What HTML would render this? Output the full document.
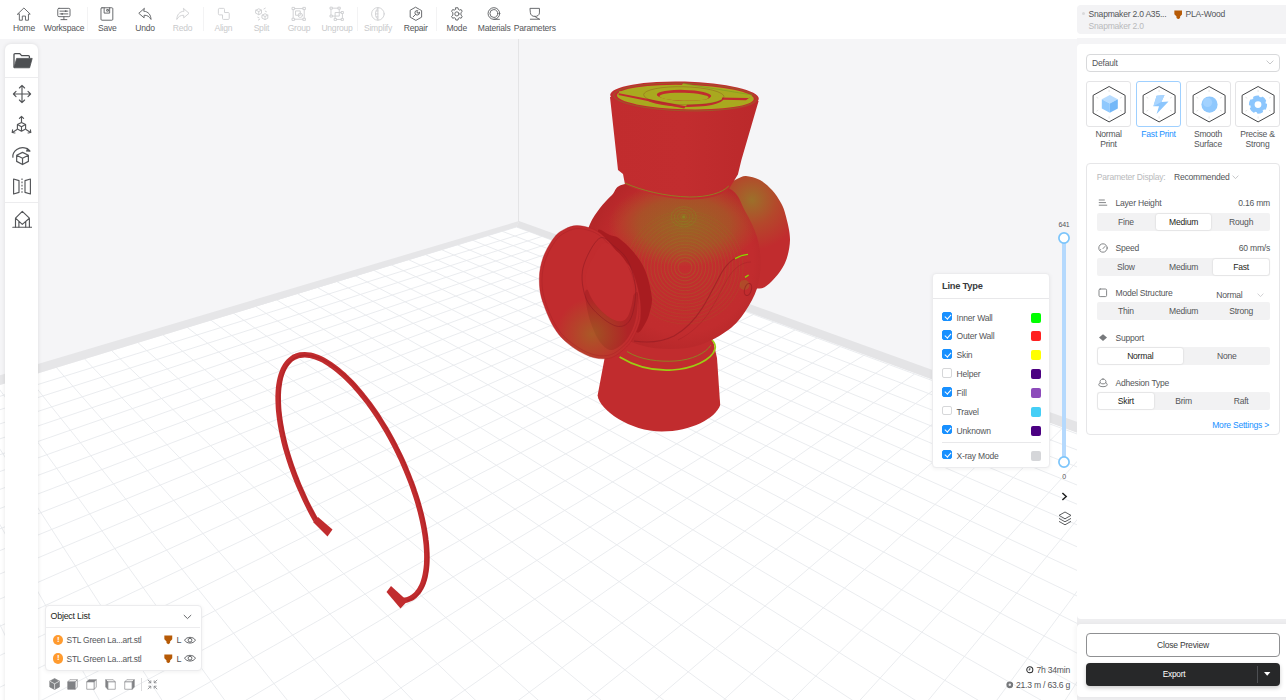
<!DOCTYPE html>
<html><head><meta charset="utf-8"><title>Snapmaker Luban</title>
<style>
*{box-sizing:border-box;margin:0;padding:0}
html,body{width:1286px;height:700px;overflow:hidden;background:#f5f5f7;font-family:"Liberation Sans",sans-serif;font-size:8px;color:#545659;letter-spacing:-0.22px}
#scene{position:absolute;left:0;top:0}
.abs{position:absolute}
#topbar{position:absolute;left:0;top:0;width:1286px;height:38.5px;background:#fff}
.tb{position:absolute;top:0;height:38px;text-align:center;font-size:8.55px;color:#55575a;white-space:nowrap}
.tb svg{position:absolute;left:50%;top:5px;margin-left:-9px;width:18px;height:18px}
.tb span{position:absolute;left:-20px;right:-20px;top:22.5px;line-height:10px}
.tb.dis{color:#c9cacc}
.tbsep{position:absolute;top:7px;width:1px;height:24px;background:#f3f3f4}
#machine{position:absolute;left:1077px;top:5px;width:215px;height:28.5px;background:#f3f3f5;border-radius:4px}
#left{position:absolute;left:5px;top:44px;width:33px;height:670px;background:#fff;border-radius:6px;box-shadow:0 0 4px rgba(0,0,0,0.10)}
#left .sep{position:absolute;left:0;width:33px;height:1px;background:#ececee}
#left svg{position:absolute}
.panel{position:absolute;background:#fff;border-radius:4px;border:1px solid #ececee;box-shadow:0 1px 4px rgba(0,0,0,0.06)}
.lt-row{position:absolute;left:0;width:118px;height:12px}
.cb{position:absolute;left:9.7px;top:0px;width:9.6px;height:9.6px;border-radius:2px;border:1px solid #d6d7d9;background:#fff}
.cb.on{background:#1890ff;border-color:#1890ff}
.cb.on:after{content:"";position:absolute;left:2.4px;top:0.4px;width:2.6px;height:5px;border:solid #fff;border-width:0 1.3px 1.3px 0;transform:rotate(42deg)}
.lt-row span{position:absolute;left:24px;top:1.1px;line-height:10px;font-size:8.55px;color:#545659}
.sw{position:absolute;left:98px;top:1px;width:10px;height:10px;border-radius:2px}
#rp1{position:absolute;left:1077px;top:44px;width:215px;height:574.5px;background:#fff;border-radius:4px 0 0 4px}
#rp2{position:absolute;left:1077px;top:624px;width:215px;height:73px;background:#fff;border-radius:4px 0 0 4px;box-shadow:-2px 0 4px rgba(0,0,0,0.04)}
.card{position:absolute;top:81px;width:45px;height:45.5px;border:1px solid #e4e4e6;border-radius:3px;background:#fff}
.card.sel{border-color:#9fd0ff}
.clabel{position:absolute;top:130.4px;width:60px;text-align:center;line-height:9.6px;font-size:8.55px;color:#545659}
.seg{position:absolute;left:1097px;width:173px;height:18px;background:#f2f2f3;border-radius:2px}
.seg div{position:absolute;top:0;height:18px;line-height:19.4px;text-align:center;font-size:8.55px;color:#545659}
.seg div.on{background:#fff;color:#1e1f20;box-shadow:0 0 2px rgba(0,0,0,0.18);border-radius:2px;top:1px;height:16px;line-height:17.4px}
.rl{position:absolute;left:1115.5px;font-size:8.55px;line-height:10px;color:#545659;white-space:nowrap}
.rv{position:absolute;right:16px;font-size:8.55px;line-height:10px;color:#545659;white-space:nowrap}
</style></head><body>
<svg id="scene" width="1286" height="700" viewBox="0 0 1286 700"><defs>
<radialGradient id="gSP" cx="682" cy="262" r="95" gradientUnits="userSpaceOnUse">
<stop offset="0" stop-color="#c32d2f"/><stop offset="0.75" stop-color="#c12c2e"/><stop offset="1" stop-color="#b52729"/></radialGradient>
<radialGradient id="gSP2" cx="684" cy="224" r="76" gradientUnits="userSpaceOnUse" gradientTransform="translate(684 224) scale(1 0.56) translate(-684 -224)">
<stop offset="0" stop-color="#7a8f1e" stop-opacity="0.56"/><stop offset="0.6" stop-color="#808f1e" stop-opacity="0.36"/><stop offset="1" stop-color="#8f8f1e" stop-opacity="0"/></radialGradient>
<radialGradient id="gRF" cx="752" cy="200" r="50" gradientUnits="userSpaceOnUse">
<stop offset="0" stop-color="#9c702a"/><stop offset="0.5" stop-color="#b4482b"/><stop offset="1" stop-color="#c12c2e"/></radialGradient>
<radialGradient id="gLF" cx="592" cy="334" r="36" gradientUnits="userSpaceOnUse">
<stop offset="0" stop-color="#8f8f1e" stop-opacity="0.45"/><stop offset="0.5" stop-color="#8f8f1e" stop-opacity="0.22"/><stop offset="1" stop-color="#8f8f1e" stop-opacity="0"/></radialGradient>
<linearGradient id="gTC" x1="610" y1="0" x2="758" y2="0" gradientUnits="userSpaceOnUse">
<stop offset="0" stop-color="#c12c2e"/><stop offset="0.5" stop-color="#c22d2f"/><stop offset="1" stop-color="#bb292b"/></linearGradient>
</defs><rect x="0" y="0" width="1286" height="700" fill="#f5f5f7"/><polygon points="516.5,227 -10,388 -10,710 1300,710 1300,514 " fill="#ffffff"/><path d="M516.5,227.0L1248.5,497.3M502.3,231.3L1240.1,512.0M487.8,235.7L1231.4,527.5M472.8,240.3L1222.2,543.8M457.4,244.9L1212.5,560.9M441.6,249.7L1202.2,579.0M425.4,254.6L1191.4,598.1M408.6,259.7L1180.0,618.3M391.4,264.9L1167.8,639.8M373.7,270.3L1154.9,662.5M355.4,275.8L1141.2,686.7M336.6,281.5L1126.6,712.5M317.2,287.4L1111.0,740.1M297.2,293.5L1094.3,769.6M276.5,299.8L1076.4,801.2M255.2,306.2L1057.1,835.3M233.2,312.9L1036.3,872.0M210.4,319.8L1013.8,911.7M186.8,327.0L989.4,954.9M162.4,334.4L962.8,1001.9M137.2,342.0L933.7,1053.3M111.0,350.0L901.7,1109.7M83.9,358.2L866.5,1172.0M55.7,366.7L827.4,1241.0M26.5,375.6L783.8,1318.0M-3.8,384.8L734.9,1404.4M-35.4,394.4L679.6,1502.0M-68.3,404.3L616.6,1613.2M-102.5,414.7L544.2,1741.0M-138.1,425.5L460.2,1889.5M-175.3,436.8L361.3,2064.0M-214.1,448.5L243.4,2272.2M-254.7,460.9L100.4,2524.8M-297.2,473.7L-100.0,2588.1M-341.6,487.2L-311.2,2588.5M-388.2,501.3L-522.5,2589.0M516.5,227.0L-388.2,501.3M529.1,231.6L-389.3,517.5M542.0,236.4L-390.4,534.5M555.4,241.4L-391.5,552.5M569.1,246.4L-392.7,571.6M583.3,251.7L-394.0,591.8M597.9,257.1L-395.4,613.3M613.0,262.6L-396.9,636.2M628.5,268.4L-398.5,660.7M644.6,274.3L-400.2,686.8M661.2,280.4L-402.0,714.8M678.4,286.8L-403.9,744.9M696.1,293.3L-406.0,777.3M714.5,300.1L-408.2,812.4M733.6,307.2L-410.7,850.4M753.3,314.5L-413.3,891.7M773.8,322.0L-416.2,936.7M795.1,329.9L-419.4,986.1M817.1,338.0L-422.9,1040.5M840.1,346.5L-426.8,1100.7M863.9,355.3L-431.1,1167.6M888.8,364.5L-435.9,1242.5M914.6,374.0L-441.3,1326.8M941.6,384.0L-447.5,1422.4M969.8,394.4L-454.5,1531.9M999.2,405.2L-462.6,1658.5M1029.9,416.6L-472.2,1806.4M1062.1,428.5L-483.4,1981.6M1095.8,440.9L-497.0,2192.4M1131.2,454.0L-513.6,2450.9M1168.3,467.7L-396.7,2588.7M1207.4,482.1L-166.0,2588.2M1248.5,497.3L64.8,2587.7" stroke="#e8eaed" stroke-width="0.9" fill="none"/><polygon points="519,221 -10,378.3 -10,388 516.5,227" fill="#e6e6e8"/><polygon points="519,221 1090,426.6 1090,437.5 516.5,227" fill="#e4e4e6"/><line x1="518.5" y1="38" x2="518.5" y2="222" stroke="#e4e4e6" stroke-width="1"/><path d="M724.0,186.0C724.2,178.0 728.7,183.2 731.0,182.0C733.3,180.8 735.5,179.5 738.0,178.5C740.5,177.5 742.3,175.8 746.0,176.0C749.7,176.2 755.7,177.7 760.0,180.0C764.3,182.3 768.5,186.2 772.0,190.0C775.5,193.8 778.7,198.6 781.0,203.0C783.3,207.4 784.5,210.4 786.0,216.6C787.5,222.8 790.2,232.3 790.0,240.0C789.8,247.7 788.0,256.2 785.0,263.0C782.0,269.8 776.3,276.7 772.0,281.0C767.7,285.3 763.9,288.8 759.4,288.6C754.9,288.4 749.9,289.8 745.0,280.0C740.1,270.2 733.5,245.7 730.0,230.0C726.5,214.3 723.8,194.0 724.0,186.0Z" fill="url(#gRF)"/><path d="M604.6,358 L597.6,395.5 C599.5,410 630,431.5 661.7,431.5 C691,431.5 716,418 720.2,405 L717,358 L712.5,338 L640,330 Z" fill="#c12c2e"/><path d="M625.0,184.0C613.7,186.5 616.2,191.0 612.0,195.0C607.8,199.0 603.7,203.2 600.0,208.0C596.3,212.8 592.7,217.8 590.0,224.0C587.3,230.2 585.0,236.5 584.0,245.0C583.0,253.5 582.7,265.0 584.0,275.0C585.3,285.0 587.7,295.8 592.0,305.0C596.3,314.2 602.0,323.3 610.0,330.0C618.0,336.7 630.0,341.8 640.0,345.0C650.0,348.2 660.0,349.0 670.0,349.0C680.0,349.0 690.2,348.2 700.0,345.0C709.8,341.8 721.1,335.2 728.6,329.7C736.1,324.1 740.3,318.5 745.0,311.7C749.7,304.9 754.4,296.7 757.0,288.6C759.6,280.5 760.7,271.6 760.7,263.0C760.7,254.4 759.6,245.7 757.0,237.0C754.4,228.3 749.7,219.2 745.0,211.0C740.3,202.8 739.4,193.2 728.6,188.0C717.8,182.8 697.3,180.7 680.0,180.0C662.7,179.3 636.3,181.5 625.0,184.0Z" fill="url(#gSP)"/><path d="M625.0,184.0C613.7,186.5 616.2,191.0 612.0,195.0C607.8,199.0 603.7,203.2 600.0,208.0C596.3,212.8 592.7,217.8 590.0,224.0C587.3,230.2 585.0,236.5 584.0,245.0C583.0,253.5 582.7,265.0 584.0,275.0C585.3,285.0 587.7,295.8 592.0,305.0C596.3,314.2 602.0,323.3 610.0,330.0C618.0,336.7 630.0,341.8 640.0,345.0C650.0,348.2 660.0,349.0 670.0,349.0C680.0,349.0 690.2,348.2 700.0,345.0C709.8,341.8 721.1,335.2 728.6,329.7C736.1,324.1 740.3,318.5 745.0,311.7C749.7,304.9 754.4,296.7 757.0,288.6C759.6,280.5 760.7,271.6 760.7,263.0C760.7,254.4 759.6,245.7 757.0,237.0C754.4,228.3 749.7,219.2 745.0,211.0C740.3,202.8 739.4,193.2 728.6,188.0C717.8,182.8 697.3,180.7 680.0,180.0C662.7,179.3 636.3,181.5 625.0,184.0Z" fill="url(#gSP2)"/><clipPath id="cSP"><path d="M625.0,184.0C613.7,186.5 616.2,191.0 612.0,195.0C607.8,199.0 603.7,203.2 600.0,208.0C596.3,212.8 592.7,217.8 590.0,224.0C587.3,230.2 585.0,236.5 584.0,245.0C583.0,253.5 582.7,265.0 584.0,275.0C585.3,285.0 587.7,295.8 592.0,305.0C596.3,314.2 602.0,323.3 610.0,330.0C618.0,336.7 630.0,341.8 640.0,345.0C650.0,348.2 660.0,349.0 670.0,349.0C680.0,349.0 690.2,348.2 700.0,345.0C709.8,341.8 721.1,335.2 728.6,329.7C736.1,324.1 740.3,318.5 745.0,311.7C749.7,304.9 754.4,296.7 757.0,288.6C759.6,280.5 760.7,271.6 760.7,263.0C760.7,254.4 759.6,245.7 757.0,237.0C754.4,228.3 749.7,219.2 745.0,211.0C740.3,202.8 739.4,193.2 728.6,188.0C717.8,182.8 697.3,180.7 680.0,180.0C662.7,179.3 636.3,181.5 625.0,184.0Z"/></clipPath><g clip-path="url(#cSP)"><ellipse cx="685" cy="267.5" rx="7.0" ry="6.8" stroke="#8a8f20" stroke-opacity="0.300" stroke-width="1.1" fill="none"/><ellipse cx="685" cy="267.5" rx="10.4" ry="10.1" stroke="#8a8f20" stroke-opacity="0.288" stroke-width="1.1" fill="none"/><ellipse cx="685" cy="267.5" rx="13.8" ry="13.4" stroke="#8a8f20" stroke-opacity="0.276" stroke-width="1.1" fill="none"/><ellipse cx="685" cy="267.5" rx="17.2" ry="16.7" stroke="#8a8f20" stroke-opacity="0.264" stroke-width="1.1" fill="none"/><ellipse cx="685" cy="267.5" rx="20.6" ry="20.0" stroke="#8a8f20" stroke-opacity="0.252" stroke-width="1.1" fill="none"/><ellipse cx="685" cy="267.5" rx="24.0" ry="23.3" stroke="#8a8f20" stroke-opacity="0.240" stroke-width="1.1" fill="none"/><ellipse cx="685" cy="267.5" rx="27.4" ry="26.6" stroke="#8a8f20" stroke-opacity="0.228" stroke-width="1.1" fill="none"/><ellipse cx="685" cy="267.5" rx="30.8" ry="29.9" stroke="#8a8f20" stroke-opacity="0.216" stroke-width="1.1" fill="none"/><ellipse cx="685" cy="267.5" rx="34.2" ry="33.2" stroke="#8a8f20" stroke-opacity="0.204" stroke-width="1.1" fill="none"/><ellipse cx="685" cy="267.5" rx="37.6" ry="36.5" stroke="#8a8f20" stroke-opacity="0.192" stroke-width="1.1" fill="none"/><ellipse cx="685" cy="267.5" rx="41.0" ry="39.8" stroke="#8a8f20" stroke-opacity="0.180" stroke-width="1.1" fill="none"/><ellipse cx="685" cy="267.5" rx="44.4" ry="43.1" stroke="#8a8f20" stroke-opacity="0.168" stroke-width="1.1" fill="none"/><ellipse cx="685" cy="267.5" rx="47.8" ry="46.4" stroke="#8a8f20" stroke-opacity="0.156" stroke-width="1.1" fill="none"/><ellipse cx="685" cy="267.5" rx="51.2" ry="49.7" stroke="#8a8f20" stroke-opacity="0.144" stroke-width="1.1" fill="none"/><ellipse cx="685" cy="267.5" rx="54.6" ry="53.0" stroke="#8a8f20" stroke-opacity="0.132" stroke-width="1.1" fill="none"/><ellipse cx="685" cy="267.5" rx="58.0" ry="56.3" stroke="#8a8f20" stroke-opacity="0.120" stroke-width="1.1" fill="none"/><ellipse cx="683.7" cy="216.8" rx="3.0" ry="2.4" stroke="#7f9a20" stroke-opacity="0.28" stroke-width="1" fill="none"/><ellipse cx="683.7" cy="216.8" rx="6.2" ry="5.0" stroke="#7f9a20" stroke-opacity="0.28" stroke-width="1" fill="none"/><ellipse cx="683.7" cy="216.8" rx="9.4" ry="7.5" stroke="#7f9a20" stroke-opacity="0.28" stroke-width="1" fill="none"/><ellipse cx="683.7" cy="216.8" rx="12.6" ry="10.1" stroke="#7f9a20" stroke-opacity="0.28" stroke-width="1" fill="none"/><circle cx="683.7" cy="216.8" r="1.6" fill="#7f9a20" fill-opacity="0.6"/></g><path d="M747.4,254.6 C735,256 728,262 722,272 C715,284 710,296 702.5,307.6 C696,318 688,328 674,336 C662,342 648,343 634,341" stroke="#8c1a20" stroke-opacity="0.55" stroke-width="1.1" fill="none"/><path d="M751,262 C742,262 734,268 728,278 C721,290 716,302 708,314 C700,325 690,334 678,340" stroke="#8c1a20" stroke-opacity="0.3" stroke-width="0.8" fill="none"/><path d="M735,258.6 C740,255.6 744,254.6 748,254.4" stroke="#8fd400" stroke-width="1.3" fill="none"/><circle cx="744.5" cy="285" r="5" fill="#8f8f1e" fill-opacity="0.3"/><ellipse cx="748" cy="289.5" rx="3.4" ry="6.2" transform="rotate(16 748 289.5)" fill="none" stroke="#8c1a20" stroke-opacity="0.6" stroke-width="1"/><path d="M745,277.4 l3.6,-2.4" stroke="#8fd400" stroke-width="1.4"/><path d="M627,351.5 C640,360 660,362 675,361 C692,360 706,353 711,345" stroke="#8a8a20" stroke-width="0.9" fill="none"/><path d="M619.6,357 C636,367 655,371 672,370 C692,369 712,360 715,349 C716,345 714,342 712,340" stroke="#9ccc14" stroke-width="1.7" fill="none"/><path d="M610,97 L618,170 L623,174 L625,184.5 C640,192 665,199 689.6,199.5 C708,199.5 724,195 729.5,188 L737.9,174.5 L741.4,160 L758.6,101 Z" fill="url(#gTC)"/><path d="M625,183 C640,190 665,196.5 689.6,197 C708,197 722,193 728.8,186" stroke="#8a8a20" stroke-opacity="0.85" stroke-width="1" fill="none"/><ellipse cx="684.5" cy="96.8" rx="74.3" ry="15.2" transform="rotate(1.5 684.5 96.8)" fill="#c12c2e"/><g transform="rotate(1.5 685 96.5)"><ellipse cx="685.4" cy="97.1" rx="68.4" ry="12.2" fill="#a9a91f"/><ellipse cx="685" cy="97" rx="71.5" ry="13.8" fill="none" stroke="#6f8f20" stroke-opacity="0.7" stroke-width="0.6"/><ellipse cx="683.8" cy="97.6" rx="40" ry="9.3" fill="#c12c2e"/><ellipse cx="683.8" cy="95.6" rx="40.4" ry="9" fill="#a9a91f"/><path d="M619,94 L650,94.5 L688,103.5 L684.5,108.6 L618.5,96.8 Z" fill="#c12c2e"/><path d="M619,93 L650,93 L690,101.5 L686,106.2 L619,95 Z" fill="#a9a91f"/><path d="M722,96 L750,95.6 L746,98.6 L722,98.8 Z" fill="#c12c2e"/><path d="M683,83.6 L752,93.2 L749,96.4 L720,96.6 L690,88.5 L680,86.5 Z" fill="#a9a91f"/><ellipse cx="683.8" cy="95.8" rx="40.2" ry="9" fill="none" stroke="#7d2a20" stroke-opacity="0.45" stroke-width="0.6"/><path d="M683,83.6 L752,93.2" stroke="#5f9a20" stroke-opacity="0.7" stroke-width="0.6"/><ellipse cx="684" cy="95.4" rx="27.2" ry="5.5" fill="#c12c2e"/><ellipse cx="684" cy="96.8" rx="24.6" ry="4" fill="#a9a91f"/></g><path d="M598.0,231.5C597.2,225.7 606.4,233.8 610.0,235.0C613.6,236.2 615.5,235.8 619.5,238.7C623.5,241.6 629.8,247.4 634.1,252.7C638.4,258.0 642.2,263.0 645.2,270.4C648.2,277.8 651.1,290.0 651.8,297.0C652.5,304.0 650.7,308.1 649.6,312.5C648.5,316.9 647.1,320.3 645.2,323.6C643.4,326.9 640.7,331.8 638.5,332.5C636.3,333.2 635.9,330.1 632.0,328.0C628.1,325.9 617.8,329.7 615.0,320.0C612.2,310.3 617.8,284.8 615.0,270.0C612.2,255.2 598.8,237.3 598.0,231.5Z" fill="#a81c20"/><path d="M539.3,279.2C539.3,271.4 540.8,264.1 543.3,257.1C545.8,250.1 550.8,241.9 554.4,237.2C558.0,232.5 561.3,230.9 565.0,229.0C568.7,227.1 572.3,225.8 576.5,225.6C580.7,225.4 586.0,226.7 590.0,228.0C594.0,229.3 597.2,231.0 600.5,233.5C603.8,236.0 607.0,239.6 610.0,243.0C613.0,246.4 615.8,250.8 618.5,254.0C621.2,257.2 623.8,259.3 626.0,262.0C628.2,264.7 630.2,266.3 632.0,270.0C633.8,273.7 635.6,279.8 636.8,284.0C638.0,288.2 638.6,291.3 639.3,295.0C639.9,298.7 640.5,302.2 640.7,306.0C640.9,309.8 640.9,314.7 640.5,318.0C640.1,321.3 639.5,323.1 638.5,326.0C637.5,328.9 636.3,332.2 634.3,335.7C632.3,339.2 630.7,343.2 626.5,347.0C622.3,350.8 615.9,357.0 609.0,358.3C602.1,359.6 593.8,358.6 585.4,354.6C577.0,350.7 565.8,343.1 558.8,334.6C551.8,326.1 546.5,312.8 543.3,303.6C540.0,294.4 539.3,286.9 539.3,279.2Z" fill="#c12c2e" stroke="#ab2024" stroke-opacity="0.55" stroke-width="0.7"/><path d="M636.5,292.0C639.4,291.3 637.8,301.0 637.5,306.0C637.2,311.0 636.4,317.0 635.0,322.0C633.6,327.0 631.5,332.0 629.0,336.0C626.5,340.0 623.2,343.7 620.0,346.0C616.8,348.3 613.3,350.7 610.0,350.0C606.7,349.3 603.0,346.0 600.0,342.0C597.0,338.0 594.2,331.7 592.0,326.0C589.8,320.3 588.0,314.0 587.0,308.0C586.0,302.0 583.8,291.3 586.0,290.0C588.2,288.7 594.3,296.7 600.0,300.0C605.7,303.3 613.9,311.3 620.0,310.0C626.1,308.7 633.6,292.7 636.5,292.0Z" fill="#a92226" fill-opacity="0.75"/><path d="M539.3,279.2C539.3,271.4 540.8,264.1 543.3,257.1C545.8,250.1 550.8,241.9 554.4,237.2C558.0,232.5 561.3,230.9 565.0,229.0C568.7,227.1 572.3,225.8 576.5,225.6C580.7,225.4 586.0,226.7 590.0,228.0C594.0,229.3 597.2,231.0 600.5,233.5C603.8,236.0 607.0,239.6 610.0,243.0C613.0,246.4 615.8,250.8 618.5,254.0C621.2,257.2 623.8,259.3 626.0,262.0C628.2,264.7 630.2,266.3 632.0,270.0C633.8,273.7 635.6,279.8 636.8,284.0C638.0,288.2 638.6,291.3 639.3,295.0C639.9,298.7 640.5,302.2 640.7,306.0C640.9,309.8 640.9,314.7 640.5,318.0C640.1,321.3 639.5,323.1 638.5,326.0C637.5,328.9 636.3,332.2 634.3,335.7C632.3,339.2 630.7,343.2 626.5,347.0C622.3,350.8 615.9,357.0 609.0,358.3C602.1,359.6 593.8,358.6 585.4,354.6C577.0,350.7 565.8,343.1 558.8,334.6C551.8,326.1 546.5,312.8 543.3,303.6C540.0,294.4 539.3,286.9 539.3,279.2Z" fill="url(#gLF)"/><path d="M542.0,279.8C542.0,272.4 543.4,265.4 545.8,258.7C548.2,252.0 552.9,244.1 556.4,239.7C559.9,235.2 563.0,233.7 566.5,231.8C570.0,230.0 573.5,228.7 577.5,228.6C581.5,228.4 586.6,229.6 590.4,230.9C594.2,232.1 597.2,233.7 600.4,236.1C603.6,238.5 606.6,241.9 609.5,245.2C612.4,248.5 615.1,252.7 617.6,255.7C620.2,258.7 622.6,260.8 624.8,263.4C626.9,265.9 628.8,267.5 630.5,271.0C632.2,274.5 633.9,280.4 635.1,284.4C636.3,288.3 636.9,291.4 637.5,294.9C638.1,298.4 638.6,301.7 638.8,305.4C639.0,309.0 639.0,313.6 638.6,316.8C638.3,320.0 637.7,321.7 636.7,324.5C635.7,327.3 634.6,330.4 632.7,333.7C630.8,337.1 629.3,340.9 625.3,344.5C621.2,348.1 615.1,354.1 608.5,355.3C602.0,356.5 594.0,355.6 586.0,351.8C578.0,348.0 567.3,340.8 560.6,332.7C553.9,324.6 548.9,311.9 545.8,303.1C542.7,294.3 542.0,287.2 542.0,279.8Z" fill="none" stroke="#9e1d23" stroke-opacity="0.4" stroke-width="0.8"/><path d="M599.0,238.5C593.8,242.2 585.2,258.2 583.0,268.0C580.8,277.8 582.7,289.0 585.5,297.0C588.3,305.0 594.5,311.1 600.0,316.0C605.5,320.9 613.4,326.2 618.6,326.5C623.8,326.8 628.2,324.2 631.0,318.0C633.8,311.8 636.1,298.5 635.6,289.0C635.1,279.5 631.6,268.2 628.0,261.0C624.4,253.8 618.8,249.8 614.0,246.0C609.2,242.2 604.2,234.8 599.0,238.5Z" fill="none" stroke="#8c1a20" stroke-opacity="0.55" stroke-width="1"/><path d="M602.5,243.8C597.5,247.4 588.6,264.1 586.5,272.6C584.4,281.1 587.0,288.1 589.8,294.7C592.6,301.3 598.3,308.1 603.1,312.5C607.9,316.9 614.3,320.9 618.6,321.3C622.9,321.7 626.2,320.1 628.7,314.7C631.2,309.3 633.9,297.4 633.6,289.0C633.3,280.6 629.9,270.8 627.0,264.5C624.1,258.2 620.6,254.4 616.5,251.0C612.4,247.6 607.5,240.2 602.5,243.8Z" fill="#c22d2f"/><path d="M315.8,520.2C314.9,518.6 312.2,513.7 310.5,510.4C308.8,507.1 307.1,503.8 305.5,500.4C303.9,497.0 302.4,493.6 300.9,490.2C299.4,486.8 297.9,483.3 296.6,479.9C295.2,476.5 293.9,473.0 292.7,469.6C291.4,466.2 290.3,462.7 289.2,459.3C288.1,455.9 287.1,452.6 286.1,449.2C285.2,445.9 284.3,442.6 283.6,439.3C282.8,436.0 282.1,432.8 281.5,429.7C280.9,426.5 280.3,423.4 279.9,420.3C279.4,417.3 279.1,414.3 278.8,411.4C278.5,408.5 278.4,405.7 278.3,403.0C278.2,400.3 278.1,397.6 278.2,395.1C278.3,392.5 278.4,390.1 278.7,387.7C278.9,385.4 279.3,383.2 279.7,381.0C280.1,378.9 280.6,376.9 281.2,375.0C281.8,373.1 282.5,371.4 283.2,369.7C284.0,368.1 284.8,366.6 285.7,365.2C286.6,363.8 287.6,362.5 288.7,361.4C289.8,360.3 290.9,359.3 292.1,358.5C293.3,357.7 294.6,357.0 296.0,356.4C297.3,355.8 298.7,355.4 300.2,355.1C301.7,354.9 303.2,354.8 304.8,354.8C306.4,354.8 308.0,354.9 309.7,355.2C311.4,355.6 313.2,356.0 315.0,356.6C316.8,357.2 318.6,357.9 320.5,358.8C322.4,359.7 324.3,360.7 326.2,361.8C328.2,363.0 330.2,364.2 332.1,365.7C334.1,367.1 336.2,368.6 338.2,370.3C340.2,372.0 342.3,373.8 344.4,375.7C346.4,377.6 348.5,379.6 350.6,381.8C352.7,383.9 354.8,386.2 356.8,388.6C358.9,390.9 361.0,393.4 363.0,396.0C365.1,398.5 367.1,401.2 369.2,403.9C371.2,406.7 373.2,409.5 375.2,412.4C377.2,415.3 379.1,418.3 381.0,421.4C382.9,424.4 384.8,427.6 386.7,430.7C388.5,433.9 390.3,437.1 392.1,440.4C393.9,443.7 395.6,447.0 397.2,450.4C398.9,453.7 400.5,457.1 402.1,460.5C403.6,463.9 405.1,467.3 406.5,470.8C408.0,474.2 409.3,477.6 410.6,481.1C411.9,484.5 413.2,487.9 414.3,491.4C415.5,494.8 416.6,498.2 417.6,501.5C418.6,504.9 419.5,508.3 420.4,511.6C421.2,514.9 422.0,518.1 422.7,521.3C423.4,524.6 424.0,527.7 424.5,530.8C425.0,533.9 425.5,537.0 425.8,539.9C426.2,542.9 426.5,545.8 426.6,548.6C426.8,551.4 426.9,554.1 426.9,556.8C426.9,559.4 426.9,562.0 426.7,564.4C426.5,566.8 426.3,569.2 425.9,571.4C425.6,573.6 425.2,575.8 424.7,577.8C424.2,579.8 423.6,581.6 422.9,583.4C422.2,585.2 421.5,586.8 420.6,588.3C419.8,589.8 418.9,591.2 417.9,592.4C416.9,593.7 415.8,594.8 414.7,595.8C413.5,596.7 412.3,597.6 411.0,598.3C409.7,598.9 408.4,599.5 407.0,599.9C405.5,600.3 403.3,600.6 402.5,600.7" stroke="#c12c2e" stroke-width="5.6" fill="none" stroke-linecap="butt"/><path d="M317.4,520.6C316.5,519.0 313.8,514.1 312.1,510.8C310.4,507.5 308.7,504.2 307.1,500.8C305.5,497.4 304.0,494.0 302.5,490.6C301.0,487.2 299.5,483.7 298.2,480.3C296.8,476.9 295.5,473.4 294.3,470.0C293.0,466.6 291.9,463.1 290.8,459.7C289.7,456.3 288.7,453.0 287.7,449.6C286.8,446.3 285.9,443.0 285.2,439.7C284.4,436.4 283.7,433.2 283.1,430.1C282.5,426.9 281.9,423.8 281.5,420.7C281.0,417.7 280.7,414.7 280.4,411.8C280.1,408.9 280.0,406.1 279.9,403.4C279.8,400.7 279.7,398.0 279.8,395.5C279.9,392.9 280.0,390.5 280.3,388.1C280.5,385.8 280.9,383.6 281.3,381.4C281.7,379.3 282.2,377.3 282.8,375.4C283.4,373.5 284.1,371.8 284.8,370.1C285.6,368.5 286.4,367.0 287.3,365.6C288.2,364.2 289.2,362.9 290.3,361.8C291.4,360.7 292.5,359.7 293.7,358.9C294.9,358.1 296.2,357.4 297.6,356.8C298.9,356.2 300.3,355.8 301.8,355.5C303.3,355.3 304.8,355.2 306.4,355.2C308.0,355.2 309.6,355.3 311.3,355.6C313.0,356.0 314.8,356.4 316.6,357.0C318.4,357.6 320.2,358.3 322.1,359.2C324.0,360.1 325.9,361.1 327.8,362.2C329.8,363.4 331.8,364.6 333.7,366.1C335.7,367.5 337.8,369.0 339.8,370.7C341.8,372.4 343.9,374.2 346.0,376.1C348.0,378.0 350.1,380.0 352.2,382.2C354.3,384.3 356.4,386.6 358.4,389.0C360.5,391.3 362.6,393.8 364.6,396.4C366.7,398.9 368.7,401.6 370.8,404.3C372.8,407.1 374.8,409.9 376.8,412.8C378.8,415.7 380.7,418.7 382.6,421.8C384.5,424.8 386.4,428.0 388.3,431.1C390.1,434.3 391.9,437.5 393.7,440.8C395.5,444.1 397.2,447.4 398.8,450.8C400.5,454.1 402.1,457.5 403.7,460.9C405.2,464.3 406.7,467.7 408.1,471.2C409.6,474.6 410.9,478.0 412.2,481.5C413.5,484.9 414.8,488.3 415.9,491.8C417.1,495.2 418.2,498.6 419.2,501.9C420.2,505.3 421.1,508.7 422.0,512.0C422.8,515.3 423.6,518.5 424.3,521.7C425.0,525.0 425.6,528.1 426.1,531.2C426.6,534.3 427.1,537.4 427.4,540.3C427.8,543.3 428.1,546.2 428.2,549.0C428.4,551.8 428.5,554.5 428.5,557.2C428.5,559.8 428.5,562.4 428.3,564.8C428.1,567.2 427.9,569.6 427.5,571.8C427.2,574.0 426.8,576.2 426.3,578.2C425.8,580.2 425.2,582.0 424.5,583.8C423.8,585.6 423.1,587.2 422.2,588.7C421.4,590.2 420.5,591.6 419.5,592.8C418.5,594.1 417.4,595.2 416.3,596.2C415.1,597.1 413.9,598.0 412.6,598.7C411.3,599.3 410.0,599.9 408.6,600.3C407.1,600.7 404.9,601.0 404.1,601.1" stroke="#a81f25" stroke-width="1.4" fill="none" stroke-opacity="0.6"/><polygon points="313,522 318,517 332.5,529.5 327.5,536.5" fill="#c12c2e"/><polygon points="386.5,592 391,586 407.5,601 400.5,608.5" fill="#c12c2e"/></svg>
<div id="topbar">
<div class="tb" style="left:9.0px;width:30px"><svg viewBox="0 0 16 16" style="width:15.8px;height:15.8px;margin-left:-7.9px;top:5.9px;color:#606265"><path d="M1.6 8.2 L8 2 L14.4 8.2 H12.6 V14.4 H9.6 V10.2 H6.4 V14.4 H3.4 V8.2 Z" stroke="currentColor" fill="none" stroke-width="0.95" stroke-linecap="round" stroke-linejoin="round"/></svg><span>Home</span></div>
<div class="tb" style="left:49.0px;width:30px"><svg viewBox="0 0 16 16" style="width:15.8px;height:15.8px;margin-left:-7.9px;top:5.9px;color:#606265"><rect x="1.8" y="2.4" width="12.4" height="8.4" rx="1.2" stroke="currentColor" fill="none" stroke-width="0.95" stroke-linecap="round" stroke-linejoin="round"/><path d="M8 10.8 V13.8 M5 13.8 H11 M4 5.2 H12 M4 8 H12" stroke="currentColor" fill="none" stroke-width="0.95" stroke-linecap="round" stroke-linejoin="round"/><rect x="9" y="4.4" width="1.6" height="1.6" fill="currentColor"/><rect x="5.4" y="7.2" width="1.6" height="1.6" fill="currentColor"/></svg><span>Workspace</span></div>
<div class="tb" style="left:92.3px;width:30px"><svg viewBox="0 0 16 16" style="width:15.8px;height:15.8px;margin-left:-7.9px;top:5.9px;color:#606265"><rect x="2" y="1.8" width="12" height="12.6" rx="1" stroke="currentColor" fill="none" stroke-width="0.95" stroke-linecap="round" stroke-linejoin="round"/><path d="M5.2 1.8 V7.2 H10.8 V1.8" stroke="currentColor" fill="none" stroke-width="0.95" stroke-linecap="round" stroke-linejoin="round"/><rect x="8.2" y="3.6" width="1.4" height="1.6" stroke="currentColor" fill="none" stroke-width="0.95" stroke-linecap="round" stroke-linejoin="round" stroke-width="0.8"/></svg><span>Save</span></div>
<div class="tb" style="left:130.0px;width:30px"><svg viewBox="0 0 16 16" style="width:15.8px;height:15.8px;margin-left:-7.9px;top:5.9px;color:#606265"><path d="M7.2 2.6 L1.8 7.4 L7.2 12 V9.4 C10.4 9.2 12.6 10.8 14.2 13.6 C14 9 11.6 5.6 7.2 5.3 Z" stroke="currentColor" fill="none" stroke-width="0.95" stroke-linecap="round" stroke-linejoin="round"/></svg><span>Undo</span></div>
<div class="tb dis" style="left:167.6px;width:30px"><svg viewBox="0 0 16 16" style="width:15.8px;height:15.8px;margin-left:-7.9px;top:5.9px;color:#cfd0d2"><path d="M8.8 2.6 L14.2 7.4 L8.8 12 V9.4 C5.6 9.2 3.4 10.8 1.8 13.6 C2 9 4.4 5.6 8.8 5.3 Z" stroke="currentColor" fill="none" stroke-width="0.95" stroke-linecap="round" stroke-linejoin="round"/></svg><span>Redo</span></div>
<div class="tb dis" style="left:208.4px;width:30px"><svg viewBox="0 0 16 16" style="width:15.8px;height:15.8px;margin-left:-7.9px;top:5.9px;color:#cfd0d2"><path d="M2.4 3.4 a1 1 0 0 1 1 -1 H7.6 a1 1 0 0 1 1 1 V6.6 H12.4 a1 1 0 0 1 1 1 V12.6 a1 1 0 0 1 -1 1 H7.6 a1 1 0 0 1 -1 -1 V9 H3.4 a1 1 0 0 1 -1 -1 Z" stroke="currentColor" fill="none" stroke-width="0.95" stroke-linecap="round" stroke-linejoin="round"/></svg><span>Align</span></div>
<div class="tb dis" style="left:246.4px;width:30px"><svg viewBox="0 0 16 16" style="width:15.8px;height:15.8px;margin-left:-7.9px;top:5.9px;color:#cfd0d2"><path d="M2 4.2 L4.8 2.8 L7.6 4.2 V7.4 L4.8 8.8 L2 7.4 Z M2 4.2 L4.8 5.6 L7.6 4.2 M4.8 5.6 V8.8" stroke="currentColor" fill="none" stroke-width="0.95" stroke-linecap="round" stroke-linejoin="round" stroke-width="0.9"/><path d="M8.4 9.2 L11.2 7.8 L14 9.2 V12.4 L11.2 13.8 L8.4 12.4 Z M8.4 9.2 L11.2 10.6 L14 9.2 M11.2 10.6 V13.8" stroke="currentColor" fill="none" stroke-width="0.95" stroke-linecap="round" stroke-linejoin="round" stroke-width="0.9"/><path d="M10 3 l1.4 -0.8 M11.4 5.2 l1.2 .6 M3.8 11.4 l1.2 .6 M5.6 13.6 l-1.2 .6" stroke="currentColor" fill="none" stroke-width="0.95" stroke-linecap="round" stroke-linejoin="round" stroke-width="0.8"/></svg><span>Split</span></div>
<div class="tb dis" style="left:284.0px;width:30px"><svg viewBox="0 0 16 16" style="width:15.8px;height:15.8px;margin-left:-7.9px;top:5.9px;color:#cfd0d2"><rect x="2.6" y="2.6" width="10.8" height="10.8" stroke="currentColor" fill="none" stroke-width="0.95" stroke-linecap="round" stroke-linejoin="round"/><rect x="1.4" y="1.4" width="2.2" height="2.2" fill="#fff" stroke="currentColor" fill="none" stroke-width="0.95" stroke-linecap="round" stroke-linejoin="round" stroke-width="0.9"/><rect x="12.4" y="1.4" width="2.2" height="2.2" fill="#fff" stroke="currentColor" fill="none" stroke-width="0.95" stroke-linecap="round" stroke-linejoin="round" stroke-width="0.9"/><rect x="1.4" y="12.4" width="2.2" height="2.2" fill="#fff" stroke="currentColor" fill="none" stroke-width="0.95" stroke-linecap="round" stroke-linejoin="round" stroke-width="0.9"/><rect x="12.4" y="12.4" width="2.2" height="2.2" fill="#fff" stroke="currentColor" fill="none" stroke-width="0.95" stroke-linecap="round" stroke-linejoin="round" stroke-width="0.9"/><rect x="5" y="5" width="4.4" height="4.4" stroke="currentColor" fill="none" stroke-width="0.95" stroke-linecap="round" stroke-linejoin="round" stroke-width="0.9"/><circle cx="9.4" cy="9.4" r="2.2" stroke="currentColor" fill="none" stroke-width="0.95" stroke-linecap="round" stroke-linejoin="round" stroke-width="0.9"/></svg><span>Group</span></div>
<div class="tb dis" style="left:322.0px;width:30px"><svg viewBox="0 0 16 16" style="width:15.8px;height:15.8px;margin-left:-7.9px;top:5.9px;color:#cfd0d2"><rect x="2.4" y="2.2" width="8" height="8" stroke="currentColor" fill="none" stroke-width="0.95" stroke-linecap="round" stroke-linejoin="round"/><rect x="6.6" y="6.6" width="7" height="7" stroke="currentColor" fill="none" stroke-width="0.95" stroke-linecap="round" stroke-linejoin="round"/><rect x="1.4" y="1.2" width="2" height="2" fill="#fff" stroke="currentColor" fill="none" stroke-width="0.95" stroke-linecap="round" stroke-linejoin="round" stroke-width="0.9"/><rect x="9.4" y="1.2" width="2" height="2" fill="#fff" stroke="currentColor" fill="none" stroke-width="0.95" stroke-linecap="round" stroke-linejoin="round" stroke-width="0.9"/><rect x="1.4" y="9.2" width="2" height="2" fill="#fff" stroke="currentColor" fill="none" stroke-width="0.95" stroke-linecap="round" stroke-linejoin="round" stroke-width="0.9"/><rect x="12.6" y="5.6" width="2" height="2" fill="#fff" stroke="currentColor" fill="none" stroke-width="0.95" stroke-linecap="round" stroke-linejoin="round" stroke-width="0.9"/><rect x="12.6" y="12.6" width="2" height="2" fill="#fff" stroke="currentColor" fill="none" stroke-width="0.95" stroke-linecap="round" stroke-linejoin="round" stroke-width="0.9"/><rect x="5.6" y="12.6" width="2" height="2" fill="#fff" stroke="currentColor" fill="none" stroke-width="0.95" stroke-linecap="round" stroke-linejoin="round" stroke-width="0.9"/></svg><span>Ungroup</span></div>
<div class="tb dis" style="left:363.0px;width:30px"><svg viewBox="0 0 16 16" style="width:15.8px;height:15.8px;margin-left:-7.9px;top:5.9px;color:#cfd0d2"><circle cx="8" cy="8" r="6.4" stroke="currentColor" fill="none" stroke-width="0.95" stroke-linecap="round" stroke-linejoin="round"/><path d="M8 1.6 V14.4" stroke="currentColor" fill="none" stroke-width="0.95" stroke-linecap="round" stroke-linejoin="round"/><path d="M8 2.6 C4.6 4 4.6 12 8 13.4" stroke="currentColor" fill="none" stroke-width="0.95" stroke-linecap="round" stroke-linejoin="round" stroke-width="0.8"/><path d="M6.6 5 h1.4 M6.4 8 h1.6 M6.6 11 h1.4" stroke="currentColor" fill="none" stroke-width="0.95" stroke-linecap="round" stroke-linejoin="round" stroke-width="0.8"/></svg><span>Simplify</span></div>
<div class="tb" style="left:400.7px;width:30px"><svg viewBox="0 0 16 16" style="width:15.8px;height:15.8px;margin-left:-7.9px;top:5.9px;color:#606265"><path d="M8 1.4 L13.8 4.7 V11.3 L8 14.6 L2.2 11.3 V4.7 Z" stroke="currentColor" fill="none" stroke-width="0.95" stroke-linecap="round" stroke-linejoin="round"/><circle cx="9.3" cy="6.9" r="2.3" stroke="currentColor" fill="none" stroke-width="0.95" stroke-linecap="round" stroke-linejoin="round"/><path d="M7.6 8.6 L5.2 11" stroke="currentColor" fill="none" stroke-width="0.95" stroke-linecap="round" stroke-linejoin="round" stroke-width="1.3"/><path d="M9.5 6.7 L12 4.2" stroke="#fff" stroke-width="1.5"/><path d="M9.3 5.6 V7 H10.7" stroke="currentColor" fill="none" stroke-width="0.95" stroke-linecap="round" stroke-linejoin="round" stroke-width="0.8"/></svg><span>Repair</span></div>
<div class="tb" style="left:441.7px;width:30px"><svg viewBox="0 0 16 16" style="width:15.8px;height:15.8px;margin-left:-7.9px;top:5.9px;color:#606265"><circle cx="8" cy="8" r="2.1" stroke="currentColor" fill="none" stroke-width="0.95" stroke-linecap="round" stroke-linejoin="round"/><path d="M6.9 1.8 H9.1 L9.5 3.5 L10.6 4.1 L12.3 3.6 L13.4 5.5 L12.1 6.7 V7.9 V9.3 L13.4 10.5 L12.3 12.4 L10.6 11.9 L9.5 12.5 L9.1 14.2 H6.9 L6.5 12.5 L5.4 11.9 L3.7 12.4 L2.6 10.5 L3.9 9.3 V6.7 L2.6 5.5 L3.7 3.6 L5.4 4.1 L6.5 3.5 Z" stroke="currentColor" fill="none" stroke-width="0.95" stroke-linecap="round" stroke-linejoin="round" stroke-width="0.95"/></svg><span>Mode</span></div>
<div class="tb" style="left:479.2px;width:30px"><svg viewBox="0 0 16 16" style="width:15.8px;height:15.8px;margin-left:-7.9px;top:5.9px;color:#606265"><circle cx="8" cy="7.6" r="5.9" stroke="currentColor" fill="none" stroke-width="0.95" stroke-linecap="round" stroke-linejoin="round"/><circle cx="8" cy="7.6" r="4" stroke="currentColor" fill="none" stroke-width="0.95" stroke-linecap="round" stroke-linejoin="round"/><path d="M8 13.5 H13.6" stroke="currentColor" fill="none" stroke-width="0.95" stroke-linecap="round" stroke-linejoin="round"/></svg><span>Materials</span></div>
<div class="tb" style="left:519.8px;width:30px"><svg viewBox="0 0 16 16" style="width:15.8px;height:15.8px;margin-left:-7.9px;top:5.9px;color:#606265"><path d="M3.4 2.4 H12.6 V7 C12.6 9 10.6 10.6 8 10.6 C5.4 10.6 3.4 9 3.4 7 Z" stroke="currentColor" fill="none" stroke-width="0.95" stroke-linecap="round" stroke-linejoin="round"/><path d="M3.4 13.4 H12.6 M8 10.6 C9 11.6 11 12.6 12.6 13.4" stroke="currentColor" fill="none" stroke-width="0.95" stroke-linecap="round" stroke-linejoin="round"/></svg><span>Parameters</span></div>
<div class="tbsep" style="left:86.5px"></div>
<div class="tbsep" style="left:203.3px"></div>
<div class="tbsep" style="left:357.4px"></div>
<div class="tbsep" style="left:436.2px"></div>
<div id="machine"><div class="abs" style="left:4.5px;top:7px;width:3px;height:3px;border-radius:2px;background:#d9d9db"></div><div class="abs" style="left:11.6px;top:3.6px;font-size:8.55px;line-height:10px;color:#545659;white-space:nowrap">Snapmaker 2.0 A35...</div><svg class="abs" style="left:96.6px;top:4.6px" width="8.6" height="9.4" viewBox="0 0 9 10"><path d="M0.3 0.4 H8.7 V4.6 L6.4 7 V8.6 L4.5 9.8 L2.6 8.6 V7 L0.3 4.6 Z" fill="#b65a06"/></svg><div class="abs" style="left:108.6px;top:3.6px;font-size:8.55px;line-height:10px;color:#545659;white-space:nowrap">PLA-Wood</div><div class="abs" style="left:11.6px;top:16.4px;font-size:8.55px;line-height:10px;color:#b9babc;white-space:nowrap">Snapmaker 2.0</div></div>
</div>
<div id="left">
<svg style="left:8px;top:8px" width="20" height="17" viewBox="0 0 20 17"><path d="M1 15.5 V2.6 a1 1 0 0 1 1 -1 H6.8 L8.6 3.6 H15.4 a1 1 0 0 1 1 1 V6.2" stroke="#4d4f52" stroke-width="1.3" fill="none" stroke-linejoin="round"/><path d="M1 15.8 L3.6 6.4 H19.2 L16.6 15.8 Z" fill="#4d4f52" stroke="#4d4f52" stroke-width="0.8" stroke-linejoin="round"/></svg>
<div class="sep" style="top:33px"></div>
<svg style="left:6.6px;top:39.9px" width="20" height="20" viewBox="0 0 20 20"><path d="M10 1.4 V18.6 M1.4 10 H18.6 M7.4 4 L10 1.4 L12.6 4 M7.4 16 L10 18.6 L12.6 16 M4 7.4 L1.4 10 L4 12.6 M16 7.4 L18.6 10 L16 12.6" stroke="#545659" fill="none" stroke-width="1.15" stroke-linecap="round" stroke-linejoin="round"/></svg>
<svg style="left:6.1px;top:71px" width="21" height="21" viewBox="0 0 21 21"><path d="M10.5 7.4 L14.6 9.6 V14 L10.5 16.2 L6.4 14 V9.6 Z M6.4 9.6 L10.5 11.8 L14.6 9.6 M10.5 11.8 V16.2" stroke="#545659" fill="none" stroke-width="1.15" stroke-linecap="round" stroke-linejoin="round" stroke-width="1.05"/><path d="M10.5 7 V1.4 M8.4 3.4 L10.5 1.4 L12.6 3.4 M6 14.6 L1.4 17.4 M1.6 14.8 L1.2 17.5 L4 18 M15 14.6 L19.6 17.4 M19.4 14.8 L19.8 17.5 L17 18" stroke="#545659" fill="none" stroke-width="1.15" stroke-linecap="round" stroke-linejoin="round" stroke-width="1.05"/></svg>
<svg style="left:5.6px;top:100.4px" width="22" height="22" viewBox="0 0 21 21"><path d="M11 8 L16.6 10.8 V16.6 L11 19.6 L5.4 16.6 V10.8 Z M5.4 10.8 L11 13.6 L16.6 10.8 M11 13.6 V19.6" stroke="#545659" fill="none" stroke-width="1.15" stroke-linecap="round" stroke-linejoin="round" stroke-width="1.1"/><path d="M1.8 12.6 C1.2 6.6 8 1.8 14.8 4.2 C16.2 4.8 17.2 5.6 18 6.6" stroke="#545659" fill="none" stroke-width="1.15" stroke-linecap="round" stroke-linejoin="round" stroke-width="1.1"/><path d="M15.6 3.6 L18.6 7.4 L14.2 7.2 Z" fill="#545659"/></svg>
<svg style="left:6.6px;top:132.5px" width="20" height="19" viewBox="0 0 20 19"><path d="M1.6 2 L7 3.6 V15.4 L1.6 17 Z M18.4 2 L13 3.6 V15.4 L18.4 17 Z" stroke="#545659" fill="none" stroke-width="1.15" stroke-linecap="round" stroke-linejoin="round"/><path d="M10 1.4 V17.6" stroke="#545659" stroke-width="1.1" stroke-dasharray="1.6 1.6"/></svg>
<div class="sep" style="top:157.6px"></div>
<svg style="left:6.6px;top:166px" width="20" height="20" viewBox="0 0 20 20"><path d="M10.3 1.4 L17.4 8.2 L10.3 14.4 L3.5 8.2 Z M3.5 8.2 V17.1 M17.4 8.2 V17.1 M6.9 11.6 V17.1 M13.7 11.6 V17.1" stroke="#545659" fill="none" stroke-width="1.15" stroke-linecap="round" stroke-linejoin="round" stroke-width="1.05"/><path d="M0.8 17.2 H19.8" stroke="#545659" fill="none" stroke-width="1.15" stroke-linecap="round" stroke-linejoin="round"/></svg>
</div>
<div class="panel" style="left:45px;top:604.6px;width:157px;height:66px"><div class="abs" style="left:4.5px;top:5.6px;font-size:8.9px;line-height:10px;color:#1e1f20">Object List</div><svg class="abs" style="left:137px;top:8px" width="9" height="6" viewBox="0 0 9 6"><path d="M0.8 1 L4.5 4.6 L8.2 1" stroke="#545659" stroke-width="0.9" fill="none"/></svg><div class="abs" style="left:0;top:21.6px;width:154px;height:1px;background:#ececee"></div>
<div class="abs" style="left:7px;top:29px;width:10.4px;height:10.4px;border-radius:6px;background:#ff9b2f;color:#fff;font-size:8px;font-weight:bold;line-height:10.4px;text-align:center">!</div><div class="abs" style="left:20.6px;top:29.4px;font-size:8.4px;line-height:10px;color:#545659;white-space:nowrap">STL Green La...art.stl</div><svg class="abs" style="left:118.4px;top:29.6px" width="8.6" height="9.4" viewBox="0 0 9 10"><path d="M0.3 0.4 H8.7 V4.6 L6.4 7 V8.6 L4.5 9.8 L2.6 8.6 V7 L0.3 4.6 Z" fill="#b65a06"/></svg><div class="abs" style="left:130.6px;top:29.4px;font-size:9px;line-height:10px;color:#545659">L</div><svg class="abs" style="left:137.6px;top:30px" width="12" height="8.4" viewBox="0 0 12 8.4"><path d="M0.6 4.2 C2.6 0.4 9.4 0.4 11.4 4.2 C9.4 8 2.6 8 0.6 4.2 Z" stroke="#545659" stroke-width="0.9" fill="none"/><circle cx="6" cy="4.2" r="1.9" stroke="#545659" stroke-width="0.9" fill="none"/></svg>
<div class="abs" style="left:7px;top:47.8px;width:10.4px;height:10.4px;border-radius:6px;background:#ff9b2f;color:#fff;font-size:8px;font-weight:bold;line-height:10.4px;text-align:center">!</div><div class="abs" style="left:20.6px;top:48.199999999999996px;font-size:8.4px;line-height:10px;color:#545659;white-space:nowrap">STL Green La...art.stl</div><svg class="abs" style="left:118.4px;top:48.4px" width="8.6" height="9.4" viewBox="0 0 9 10"><path d="M0.3 0.4 H8.7 V4.6 L6.4 7 V8.6 L4.5 9.8 L2.6 8.6 V7 L0.3 4.6 Z" fill="#b65a06"/></svg><div class="abs" style="left:130.6px;top:48.199999999999996px;font-size:9px;line-height:10px;color:#545659">L</div><svg class="abs" style="left:137.6px;top:48.8px" width="12" height="8.4" viewBox="0 0 12 8.4"><path d="M0.6 4.2 C2.6 0.4 9.4 0.4 11.4 4.2 C9.4 8 2.6 8 0.6 4.2 Z" stroke="#545659" stroke-width="0.9" fill="none"/><circle cx="6" cy="4.2" r="1.9" stroke="#545659" stroke-width="0.9" fill="none"/></svg>
</div>
<svg class="abs" style="left:48.6px;top:678.4px" width="11.2" height="12.1" viewBox="0 0 12 13"><path d="M6 0.6 L11.2 3.4 L6 6.2 L0.8 3.4 Z" fill="#808285" stroke="#808285" stroke-width="0.7" stroke-linejoin="round"/><path d="M0.8 3.4 L6 6.2 V12.4 L0.8 9.6 Z" fill="#808285" stroke="#808285" stroke-width="0.7" stroke-linejoin="round"/><path d="M11.2 3.4 L6 6.2 V12.4 L11.2 9.6 Z" fill="#808285" stroke="#808285" stroke-width="0.7" stroke-linejoin="round"/><path d="M0.8 3.4 L6 6.2 L11.2 3.4 M6 6.2 V12.4" stroke="#fff" stroke-width="0.7" fill="none"/></svg>
<svg class="abs" style="left:67.3px;top:679.2px" width="11" height="11" viewBox="0 0 12 12"><g ><path d="M0.8 3.2 L3 0.8 H11.2 L9 3.2 Z" fill="#fff" stroke="#808285" stroke-width="0.7" stroke-linejoin="round"/><path d="M0.8 3.2 H9 V11.2 H0.8 Z" fill="#808285" stroke="#808285" stroke-width="0.7" stroke-linejoin="round"/><path d="M9 3.2 L11.2 0.8 V8.8 L9 11.2 Z" fill="#fff" stroke="#808285" stroke-width="0.7" stroke-linejoin="round"/></g></svg>
<svg class="abs" style="left:85.9px;top:679.2px" width="11" height="11" viewBox="0 0 12 12"><g ><path d="M0.8 3.2 L3 0.8 H11.2 L9 3.2 Z" fill="#808285" stroke="#808285" stroke-width="0.7" stroke-linejoin="round"/><path d="M0.8 3.2 H9 V11.2 H0.8 Z" fill="#fff" stroke="#808285" stroke-width="0.7" stroke-linejoin="round"/><path d="M9 3.2 L11.2 0.8 V8.8 L9 11.2 Z" fill="#fff" stroke="#808285" stroke-width="0.7" stroke-linejoin="round"/></g></svg>
<svg class="abs" style="left:104.7px;top:679.2px" width="11" height="11" viewBox="0 0 12 12"><g transform="translate(12 0) scale(-1 1)"><path d="M0.8 3.2 L3 0.8 H11.2 L9 3.2 Z" fill="#fff" stroke="#808285" stroke-width="0.7" stroke-linejoin="round"/><path d="M0.8 3.2 H9 V11.2 H0.8 Z" fill="#fff" stroke="#808285" stroke-width="0.7" stroke-linejoin="round"/><path d="M9 3.2 L11.2 0.8 V8.8 L9 11.2 Z" fill="#808285" stroke="#808285" stroke-width="0.7" stroke-linejoin="round"/></g></svg>
<svg class="abs" style="left:123.5px;top:679.2px" width="11" height="11" viewBox="0 0 12 12"><g ><path d="M0.8 3.2 L3 0.8 H11.2 L9 3.2 Z" fill="#fff" stroke="#808285" stroke-width="0.7" stroke-linejoin="round"/><path d="M0.8 3.2 H9 V11.2 H0.8 Z" fill="#fff" stroke="#808285" stroke-width="0.7" stroke-linejoin="round"/><path d="M9 3.2 L11.2 0.8 V8.8 L9 11.2 Z" fill="#808285" stroke="#808285" stroke-width="0.7" stroke-linejoin="round"/></g></svg>
<div class="abs" style="left:140.6px;top:678px;width:1px;height:13px;background:#dcdcde"></div>
<svg class="abs" style="left:146.5px;top:679px" width="11" height="11" viewBox="0 0 11 11"><path d="M0.8 0.8 L3.8 3.8 M3.8 1.4 V3.8 H1.4 M10.2 0.8 L7.2 3.8 M7.2 1.4 V3.8 H9.6 M0.8 10.2 L3.8 7.2 M3.8 9.6 V7.2 H1.4 M10.2 10.2 L7.2 7.2 M7.2 9.6 V7.2 H9.6" stroke="#808285" stroke-width="0.8" fill="none"/></svg>
<div class="panel" style="left:931.6px;top:273px;width:118.5px;height:194.5px"><div class="abs" style="left:9.4px;top:7.4px;font-size:9.3px;font-weight:bold;line-height:11px;color:#3a3b3d;white-space:nowrap">Line Type</div><div class="abs" style="left:0;top:24px;width:116.5px;height:1px;background:#e8e8ea"></div>
<div class="lt-row" style="top:37.5px"><div class="cb on"></div><span>Inner Wall</span><div class="sw" style="background:#00ff00"></div></div>
<div class="lt-row" style="top:56.4px"><div class="cb on"></div><span>Outer Wall</span><div class="sw" style="background:#ff2121"></div></div>
<div class="lt-row" style="top:75.2px"><div class="cb on"></div><span>Skin</span><div class="sw" style="background:#ffff00"></div></div>
<div class="lt-row" style="top:94.0px"><div class="cb"></div><span>Helper</span><div class="sw" style="background:#4b0082"></div></div>
<div class="lt-row" style="top:113.0px"><div class="cb on"></div><span>Fill</span><div class="sw" style="background:#8d4bbb"></div></div>
<div class="lt-row" style="top:131.8px"><div class="cb"></div><span>Travel</span><div class="sw" style="background:#44cef6"></div></div>
<div class="lt-row" style="top:150.6px"><div class="cb on"></div><span>Unknown</span><div class="sw" style="background:#4b0082"></div></div>
<div class="lt-row" style="top:175.5px"><div class="cb on"></div><span>X-ray Mode</span><div class="sw" style="background:#d5d6d9"></div></div>
<div class="abs" style="left:9.5px;top:168px;width:98.5px;height:1px;background:#e8e8ea"></div>
</div>
<div class="abs" style="left:1061.7px;top:238px;width:4.7px;height:224px;background:#b5d9fd;border-radius:2px"></div>
<svg class="abs" style="left:1057px;top:231.2px" width="14" height="14" viewBox="0 0 14 14"><circle cx="7" cy="7" r="5.1" fill="#fff" stroke="#7cc5fb" stroke-width="1.7"/></svg>
<svg class="abs" style="left:1057px;top:455.2px" width="14" height="14" viewBox="0 0 14 14"><circle cx="7" cy="7" r="5.1" fill="#fff" stroke="#7cc5fb" stroke-width="1.7"/></svg>
<div class="abs" style="left:1050px;top:220.6px;width:28px;text-align:center;font-size:7px;line-height:8px;color:#545659">641</div>
<div class="abs" style="left:1050px;top:473px;width:28px;text-align:center;font-size:7px;line-height:8px;color:#545659">0</div>
<svg class="abs" style="left:1060.6px;top:491.6px" width="7" height="9" viewBox="0 0 7 9"><path d="M1.4 1 L5.2 4.5 L1.4 8" stroke="#1e1f20" stroke-width="1.5" fill="none"/></svg>
<svg class="abs" style="left:1058px;top:511px" width="14" height="15" viewBox="0 0 14 15"><path d="M7 1 L13 4.4 L7 7.8 L1 4.4 Z M1 7.4 L7 10.8 L13 7.4 M1 10.4 L7 13.8 L13 10.4" stroke="#545659" stroke-width="0.95" fill="none" stroke-linejoin="round"/></svg>
<div class="abs" style="left:960px;top:664.6px;width:110px;text-align:right;font-size:8.6px;line-height:10px;color:#545659;white-space:nowrap">7h 34min</div>
<svg class="abs" style="left:1026px;top:666px" width="7.6" height="7.6" viewBox="0 0 8 8"><circle cx="4" cy="4" r="3.2" stroke="#2b2c2e" stroke-width="1.1" fill="none"/><path d="M4 2.2 V4.2 H2.8" stroke="#2b2c2e" stroke-width="0.9" fill="none"/></svg>
<div class="abs" style="left:960px;top:680px;width:110px;text-align:right;font-size:8.6px;line-height:10px;color:#545659;white-space:nowrap">21.3 m / 63.6 g</div>
<svg class="abs" style="left:1005.6px;top:681.2px" width="7.6" height="7.6" viewBox="0 0 8 8"><circle cx="4" cy="4" r="3.6" fill="#77797c"/><circle cx="4" cy="4" r="1.3" fill="#e8e8ea"/></svg>
<div class="abs" style="left:1077px;top:38px;width:209px;height:562px;background:#f4f4f6"></div><div class="abs" style="left:1077px;top:600px;width:209px;height:100px;background:#eeeef0"></div><div id="rp1"></div><div id="rp2"></div>
<div class="abs" style="left:1086px;top:53.5px;width:194px;height:18px;border:1px solid #d8d9db;border-radius:4px;background:#fff"><div class="abs" style="left:5px;top:3.6px;font-size:8.55px;line-height:10px;color:#545659">Default</div><svg class="abs" style="left:179px;top:5.6px" width="8" height="5" viewBox="0 0 8 5"><path d="M0.6 0.6 L4 4 L7.4 0.6" stroke="#b9babc" stroke-width="0.8" fill="none"/></svg></div>
<div class="card" style="left:1086px"><svg class="abs" style="left:-1px;top:-1px" width="46" height="45.5" viewBox="0 0 46 45.5"><path d="M23.1 5.5 L39.1 14.35 V32.05 L23.1 40.9 L7.1 32.05 V14.35 Z" stroke="#3a3b3d" stroke-width="0.95" fill="none" stroke-linejoin="round"/><path d="M23.1 8.8 v2.2 M23.1 35.4 v2.2 M10.4 16.2 l1.8 1 M34 29.2 l1.8 1 M35.8 16.2 l-1.8 1 M12.2 29.2 l-1.8 1" stroke="#d0d1d3" stroke-width="0.6"/><path d="M23.8 14 L31.8 18.2 L23.8 22.4 L15.8 18.2 Z" fill="#b9ddff"/><path d="M15.8 18.2 L23.8 22.4 V31.8 L15.8 27.6 Z" fill="#8fc8fd"/><path d="M31.8 18.2 L23.8 22.4 V31.8 L31.8 27.6 Z" fill="#74b8f8"/></svg></div>
<div class="clabel" style="left:1078.5px;color:#545659">Normal<br>Print</div>
<div class="card sel" style="left:1136px"><svg class="abs" style="left:-1px;top:-1px" width="46" height="45.5" viewBox="0 0 46 45.5"><path d="M23.1 5.5 L39.1 14.35 V32.05 L23.1 40.9 L7.1 32.05 V14.35 Z" stroke="#3a3b3d" stroke-width="0.95" fill="none" stroke-linejoin="round"/><path d="M23.1 8.8 v2.2 M23.1 35.4 v2.2 M10.4 16.2 l1.8 1 M34 29.2 l1.8 1 M35.8 16.2 l-1.8 1 M12.2 29.2 l-1.8 1" stroke="#d0d1d3" stroke-width="0.6"/><path d="M20.6 14.8 L28.5 14 L25.4 21 L32.5 20.4 L20.6 33.1 L23 25.2 H17.4 Z" fill="#8cc6fd"/><path d="M20.6 14.8 L28.5 14 L25.4 21 L17.4 25.2 Z" fill="#a9d5ff"/></svg></div>
<div class="clabel" style="left:1128.5px;color:#1890ff">Fast Print</div>
<div class="card" style="left:1185.5px"><svg class="abs" style="left:-1px;top:-1px" width="46" height="45.5" viewBox="0 0 46 45.5"><path d="M23.1 5.5 L39.1 14.35 V32.05 L23.1 40.9 L7.1 32.05 V14.35 Z" stroke="#3a3b3d" stroke-width="0.95" fill="none" stroke-linejoin="round"/><path d="M23.1 8.8 v2.2 M23.1 35.4 v2.2 M10.4 16.2 l1.8 1 M34 29.2 l1.8 1 M35.8 16.2 l-1.8 1 M12.2 29.2 l-1.8 1" stroke="#d0d1d3" stroke-width="0.6"/><circle cx="23.5" cy="23.6" r="8.1" fill="#8fc8fd"/><circle cx="21.6" cy="21.4" r="4.6" fill="#a9d5ff" fill-opacity="0.7"/></svg></div>
<div class="clabel" style="left:1178.0px;color:#545659">Smooth<br>Surface</div>
<div class="card" style="left:1235px"><svg class="abs" style="left:-1px;top:-1px" width="46" height="45.5" viewBox="0 0 46 45.5"><path d="M23.1 5.5 L39.1 14.35 V32.05 L23.1 40.9 L7.1 32.05 V14.35 Z" stroke="#3a3b3d" stroke-width="0.95" fill="none" stroke-linejoin="round"/><path d="M23.1 8.8 v2.2 M23.1 35.4 v2.2 M10.4 16.2 l1.8 1 M34 29.2 l1.8 1 M35.8 16.2 l-1.8 1 M12.2 29.2 l-1.8 1" stroke="#d0d1d3" stroke-width="0.6"/><circle cx="23" cy="23.6" r="5.6" fill="none" stroke="#8cc6fd" stroke-width="4.4"/><circle cx="23" cy="23.6" r="8" fill="none" stroke="#8cc6fd" stroke-width="2.2" stroke-linecap="round" stroke-dasharray="4.2 4.18"/></svg></div>
<div class="clabel" style="left:1227.5px;color:#545659">Precise &amp;<br>Strong</div>
<div class="abs" style="left:1086px;top:163px;width:194px;height:271.5px;border:1px solid #e6e6e8;border-radius:4px"></div>
<div class="abs" style="left:1096.8px;top:172.4px;font-size:8.55px;line-height:10px;color:#b9babc;white-space:nowrap">Parameter Display:</div>
<div class="abs" style="left:1174px;top:172.4px;font-size:8.55px;line-height:10px;color:#545659;white-space:nowrap">Recommended</div>
<svg class="abs" style="left:1232px;top:175px" width="7" height="5" viewBox="0 0 7 5"><path d="M0.6 0.6 L3.5 3.6 L6.4 0.6" stroke="#b9babc" stroke-width="0.8" fill="none"/></svg>
<svg class="abs" style="left:1098px;top:198px" width="10" height="10" viewBox="0 0 10 10"><path d="M1.2 2 H6.4 M1.2 4.6 H7.6 M1.2 7.2 H8.8" stroke="#77797c" stroke-width="0.9" fill="none" stroke-linecap="round" stroke-linejoin="round"/></svg>
<div class="rl" style="top:198px">Layer Height</div>
<div class="rv" style="top:198px">0.16 mm</div>
<svg class="abs" style="left:1098px;top:243px" width="10" height="10" viewBox="0 0 10 10"><circle cx="5" cy="5" r="4.2" stroke="#77797c" stroke-width="0.9" fill="none" stroke-linecap="round" stroke-linejoin="round"/><path d="M5 5.6 L7 3.4 M2.6 6.6 h0.1" stroke="#77797c" stroke-width="0.9" fill="none" stroke-linecap="round" stroke-linejoin="round"/></svg>
<div class="rl" style="top:243px">Speed</div>
<div class="rv" style="top:243px">60 mm/s</div>
<svg class="abs" style="left:1098px;top:287.5px" width="10" height="10" viewBox="0 0 10 10"><rect x="1" y="1" width="7.6" height="7.6" rx="1.2" stroke="#77797c" stroke-width="0.9" fill="none" stroke-linecap="round" stroke-linejoin="round"/></svg>
<div class="rl" style="top:287.5px">Model Structure</div>
<svg class="abs" style="left:1098px;top:333px" width="10" height="10" viewBox="0 0 10 10"><path d="M5 1.2 L9 4.6 L5 8 L1 4.6 Z" fill="#77797c"/></svg>
<div class="rl" style="top:333px">Support</div>
<svg class="abs" style="left:1098px;top:377.5px" width="10" height="10" viewBox="0 0 10 10"><path d="M5 1 C7.4 1 8.4 3 7.8 4.8 C9.4 5.6 9.6 7 8.6 7.8 C7 9 3 9 1.4 7.8 C0.4 7 0.6 5.6 2.2 4.8 C1.6 3 2.6 1 5 1 Z M2.2 4.8 C3.4 6.4 6.6 6.4 7.8 4.8" stroke="#77797c" stroke-width="0.9" fill="none" stroke-linecap="round" stroke-linejoin="round"/></svg>
<div class="rl" style="top:377.5px">Adhesion Type</div>
<div class="abs" style="left:1216.3px;top:290px;font-size:8.55px;line-height:10px;color:#545659">Normal</div>
<svg class="abs" style="left:1256.6px;top:292.6px" width="7" height="5" viewBox="0 0 7 5"><path d="M0.6 0.6 L3.5 3.6 L6.4 0.6" stroke="#c6c7c9" stroke-width="0.8" fill="none"/></svg>
<div class="seg" style="top:212.6px"><div style="left:0.0px;width:57.7px">Fine</div><div class="on" style="left:58.7px;width:55.7px">Medium</div><div style="left:115.3px;width:57.7px">Rough</div></div>
<div class="seg" style="top:257.6px"><div style="left:0.0px;width:57.7px">Slow</div><div style="left:57.7px;width:57.7px">Medium</div><div class="on" style="left:116.3px;width:55.7px">Fast</div></div>
<div class="seg" style="top:302.2px"><div style="left:0.0px;width:57.7px">Thin</div><div style="left:57.7px;width:57.7px">Medium</div><div style="left:115.3px;width:57.7px">Strong</div></div>
<div class="seg" style="top:347.4px"><div class="on" style="left:1.0px;width:84.5px">Normal</div><div style="left:86.5px;width:86.5px">None</div></div>
<div class="seg" style="top:392.4px"><div class="on" style="left:1.0px;width:55.7px">Skirt</div><div style="left:57.7px;width:57.7px">Brim</div><div style="left:115.3px;width:57.7px">Raft</div></div>
<div class="abs" style="left:1169px;top:420px;width:100px;text-align:right;font-size:8.55px;line-height:10px;color:#1890ff;white-space:nowrap">More Settings &gt;</div>
<div class="abs" style="left:1086px;top:633px;width:194px;height:24px;border:1px solid #8f9092;border-radius:4px;background:#fff;text-align:center;line-height:22px;font-size:8.55px;color:#3a3b3d">Close Preview</div>
<div class="abs" style="left:1086px;top:662.6px;width:194px;height:23.6px;border-radius:4px;background:#272829;box-shadow:0 2px 4px rgba(0,0,0,0.2)"><div class="abs" style="left:0;top:0;width:176px;text-align:center;line-height:23.6px;font-size:8.3px;color:#fff">Export</div><div class="abs" style="left:171px;top:3px;width:1px;height:17.6px;background:#4d4f52"></div><svg class="abs" style="left:178.4px;top:9.6px" width="6.4" height="4" viewBox="0 0 6.4 4"><path d="M0 0 H6.4 L3.2 3.8 Z" fill="#fff"/></svg></div>
</body></html>
